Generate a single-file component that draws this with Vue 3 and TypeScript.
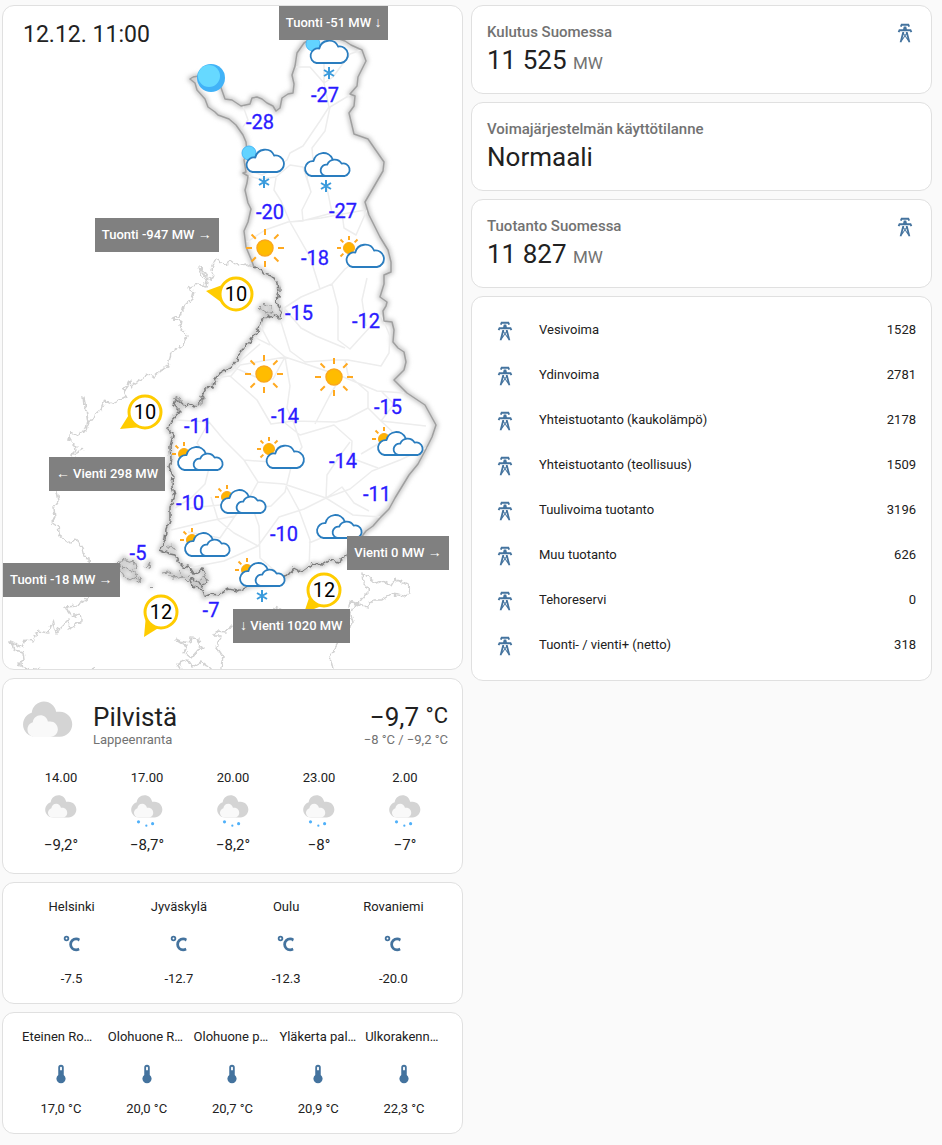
<script setup lang="ts">
interface Point { x: number; y: number }
interface Temp extends Point { text: string }
interface Wind extends Point { text: string; tail: string }
interface Flow { id: string; before?: string; text: string; after?: string }

const towerPath =
  'M8.28,5.45L6.5,4.55L7.76,2H16.23L17.5,4.55L15.72,5.44L15,4H9L8.28,5.45M18.62,8H14.09L13.3,5H10.7L9.91,8H5.38L4.1,10.55L5.89,11.44L6.62,10H17.38L18.1,11.45L19.89,10.56L18.62,8M17.77,22H15.7L15.46,21.1L12,15.9L8.53,21.1L8.3,22H6.23L9.12,11H11.19L10.83,12.35L12,14.1L13.16,12.35L12.81,11H14.88L17.77,22M11.4,15L10.5,13.65L9.32,18.13L11.4,15M14.68,18.12L13.5,13.64L12.6,15L14.68,18.12Z'
const celsiusPath =
  'M16.5,5C18.05,5 19.5,5.47 20.69,6.28L19.53,9.17C18.73,8.44 17.67,8 16.5,8C14,8 12,10 12,12.5C12,15 14,17 16.5,17C17.53,17 18.47,16.66 19.23,16.08L20.37,18.93C19.24,19.61 17.92,20 16.5,20A7.5,7.5 0 0,1 9,12.5A7.5,7.5 0 0,1 16.5,5M6,3A3,3 0 0,1 9,6A3,3 0 0,1 6,9A3,3 0 0,1 3,6A3,3 0 0,1 6,3M6,5A1,1 0 0,0 5,6A1,1 0 0,0 6,7A1,1 0 0,0 7,6A1,1 0 0,0 6,5Z'
const thermometerPath =
  'M15 13V5A3 3 0 0 0 9 5V13A5 5 0 1 0 15 13M12 4A1 1 0 0 1 13 5V8H11V5A1 1 0 0 1 12 4Z'
const cloudBack =
  'm3.8863 5.035c-0.54892 0.16898-1.04 0.46637-1.4372 0.8636-0.63077 0.63041-1.0206 1.4933-1.0206 2.455 0 1.9251 1.5589 3.4682 3.4837 3.4682h6.9688c1.9251 0 3.484-1.5981 3.484-3.5232 0-1.9251-1.5589-3.5232-3.484-3.5232h-1.0834c-0.25294-1.6916-1.6986-2.9083-3.4463-2.9083-1.7995 0-3.2805 1.4153-3.465 3.1679'
const cloudFront =
  'm4.1996 7.6995c-0.33902 0.10407-0.64276 0.28787-0.88794 0.5334-0.39017 0.38982-0.63147 0.92322-0.63147 1.5176 0 1.1896 0.96414 2.1431 2.1537 2.1431h4.3071c1.1896 0 2.153-0.98742 2.153-2.1777 0-1.1896-0.96344-2.1777-2.153-2.1777h-0.66992c-0.15593-1.0449-1.0499-1.7974-2.1297-1.7974-1.112 0-2.0274 0.87524-2.1417 1.9586'

const landBorder =
  'M193 77L199 76L208 78L219 82L225 99L232 100L241 106L250 104L252 98L257 97L262 99L267 103L273 106L276 111L280 108L282 98L288 94L293 93L294 84L292 75L295 66L297 53L304 43L312 38L330 36L345 41L351 45L362 50L366 61L358 77L357 86L350 94L355 96L354 106L349 113L354 134L368 139L384 162L383 171L365 202L369 215L380 237L388 250L391 262L391 272L384 275L384 284L380 297L387 302L386 306L383 311L384 321L392 322L394 330L393 342L398 348L404 352L406 362L404 370L394 380L407 393L425 405L436 425L432 437L426 449L418 464L409 475L395 498L389 509L380 518L373 526L366 531L357 543L346 556'
const westBorder =
  'M193 77L190 79L195 83L197 90L205 99L208 107L215 112L218 115L229 119L236 125L243 135L246 142L247 152L244 160L246 172L243 173L248 176L247 183L245 190L248 203L251 209L248 222L244 231L246 247L251 259L254 267'
const coast =
  'M254 267L260 269L265 274L273 277L278 283L279 291L277 300L279 308L282 311L280 319L275 315L263 318L260 326L255 334L248 343L242 349L237 360L231 367L221 372L215 379L213 387L207 386L203 393L202 400L194 407L188 403L184 406L176 399L174 405L180 411L171 421L168 430L173 435L170 447L171 459L169 467L173 475L172 487L175 496L170 508L170 520L166 530L165 540L160 550L170 554L175 555L179 562L185 568L189 566L194 574L203 569L207 579L203 586L196 581L190 579L193 586L202 589L204 597L211 594L218 595L228 589L238 591L251 585L267 583L281 579L288 575L294 568L302 572L313 564L322 565L331 559L337 563L346 556'
const sweden =
  'M254 267L246 264L238 266L231 261L225 265L216 259L211 270L214 276L207 280L202 276L199 267L208 278L206 286L198 284L188 288L194 292L192 299L184 306L182 314L172 319L181 320L180 326L187 336L183 344L171 353L168 366L160 371L153 377L149 374L134 384L131 388L130 381L124 389L126 396L112 403L105 400L100 411L94 416L88 424L84 397L85 407L88 420L86 430L76 436L71 431L69 440L76 447L72 455L83 449M72 455L74 463L61 479L57 491L59 501L54 508L55 518L51 522L58 527L60 536L70 543L75 538L82 548L84 557L89 558L90 575M88 598L77 606L66 607L72 616L80 613L81 621L68 629L69 619L61 627L56 634L53 620L48 633L38 631L33 641L25 640L22 647L10 642L15 650L23 652L24 660L19 665L28 668M34 670L40 667M91 669L94 668'
const estonia =
  'M176 639L187 646L184 652L191 658L198 650L203 648L198 645L199 638L191 637L190 643L180 641ZM182 669L178 663L188 660L193 667L201 662L212 670M221 668L223 657L217 648L221 636L213 636L217 631L226 632L232 625L240 628M349 607L350 601L358 604L365 595L370 590L363 583L362 573L377 583L382 581L391 586L395 579L408 585L410 592L404 596L391 594L382 600L373 600L367 607L355 604L351 613L353 622L349 629L342 636L330 657L333 669M284 611L278 608L270 613'
const islands =
  'M119 564L124 558L128 563L134 561L136 567L131 571L138 575L130 580L124 576L121 570ZM122 566L130 571M133 578L142 580L136 582M161 573L170 572L176 577L169 576M178 570L183 576L174 578M146 568L150 562L149 569M150 585L152 587M259 309L264 304L270 306L272 311L266 313ZM172 399L178 397L182 403M198 404L203 404L204 398L200 396M188 581L184 577L190 576M166 548L172 545L176 551M197 583L202 580L205 573L207 583'
const roads =
  'M296 67L310 67L324 83L333 77L350 54L361 50M324 64V83L329 107L320 121L303 146L290 153L287 160L275 168L262 175L250 171M350 95L330 107L325 131L312 148L313 160L307 178L311 192L302 210L303 221L288 222L265 230L247 242M243 106L248 120L242 128M276 178L274 190L281 201L290 222L310 257L320 289L301 297L284 308M311 192L303 167L290 165L276 177L260 179L248 176M326 183L332 213L302 221M332 213L342 213L344 228L356 235L367 210M290 222L321 218L365 210M320 289L332 284L345 269L360 258L385 263M332 284L338 307L338 340L350 349L381 315L390 336L389 353L381 366L348 360L333 360L305 362L290 351L281 322L284 308M284 308L301 328L316 336L345 348M367 278L362 300L366 326M260 325L270 344L285 357L273 379L258 378L231 366M285 357L303 363L341 376L377 391L404 393M345 360L348 375L368 392L368 408L381 421L426 426M285 357L290 386L287 408L293 421L336 422L347 419L368 408M213 378L230 376L257 400L271 424L293 421L302 447L292 463L285 492L271 506L250 509L230 504L190 508M176 420L209 422L224 440L244 460L285 463M209 422L197 443L210 464L205 484L191 498L175 508M244 460L258 482L284 484L326 498L350 489L372 471L400 460L428 447M258 482L249 498L259 526L260 558L282 577M285 484L299 510L310 540L309 571M285 423L300 435L334 425L352 441L351 458L378 468M326 498L327 475L341 454L350 442M326 498L304 509L279 517L258 546L224 561L188 568M326 498L353 515L380 517M309 543L326 536L354 529M249 500L235 516L209 521L171 530M235 516L220 538L188 532M258 546L234 533L218 520L211 497M369 511L354 503L342 487L326 498M260 344L245 357L230 370M231 376L240 365L285 357M250 335L270 345M381 421L394 404L381 391M361 454L395 434L381 421M315 424L329 397L340 378'

const snow: Point[] = [{ x: 329, y: 73 }, { x: 264, y: 182 }, { x: 326, y: 186 }, { x: 262, y: 596 }]
const suns: Point[] = [{ x: 265, y: 248 }, { x: 264, y: 374 }, { x: 334, y: 377 }]
const coldBalls: Point[] = [{ x: 313, y: 44 }, { x: 249, y: 153 }]
const allRays = [0, 45, 90, 135, 180, 225, 270, 315]
const upperRays = [0, 270, 315]
const smallSuns = [
  { x: 349, y: 248, rays: allRays }, { x: 269, y: 449, rays: allRays },
  { x: 184, y: 454, rays: upperRays }, { x: 227, y: 497, rays: upperRays },
  { x: 192, y: 540, rays: upperRays }, { x: 384, y: 439, rays: upperRays },
  { x: 247, y: 570, rays: upperRays },
]
const clouds: Point[] = [{ x: 309, y: 38 }, { x: 245, y: 147 }, { x: 345, y: 242 }, { x: 265, y: 443 }]
const doubleClouds: Point[] = [
  { x: 304, y: 151 }, { x: 177, y: 445 }, { x: 220, y: 488 }, { x: 184, y: 531 },
  { x: 316, y: 513 }, { x: 377, y: 430 }, { x: 239, y: 561 },
]
const temps: Temp[] = [
  { x: 325, y: 102, text: '-27' }, { x: 260, y: 129, text: '-28' }, { x: 270, y: 219, text: '-20' },
  { x: 343, y: 218, text: '-27' }, { x: 315, y: 265, text: '-18' }, { x: 299, y: 320, text: '-15' },
  { x: 366, y: 328, text: '-12' }, { x: 198, y: 433, text: '-11' }, { x: 285, y: 423, text: '-14' },
  { x: 388, y: 414, text: '-15' }, { x: 343, y: 468, text: '-14' }, { x: 190, y: 510, text: '-10' },
  { x: 377, y: 501, text: '-11' }, { x: 284, y: 541, text: '-10' }, { x: 138, y: 560, text: '-5' },
  { x: 211, y: 617, text: '-7' },
]
const winds: Wind[] = [
  { x: 236, y: 294, text: '10', tail: 'M206 291L225 284V305Z' },
  { x: 145, y: 412, text: '10', tail: 'M120 429L130 413L142 427Z' },
  { x: 161, y: 612, text: '12', tail: 'M144 637L146 615L160 627Z' },
  { x: 324, y: 590, text: '12', tail: 'M304 613L310 595L324 605Z' },
]
const flows: Flow[] = [
  { id: 'north', text: 'Tuonti -51 MW', after: '↓' },
  { id: 'sweden-north', text: 'Tuonti -947 MW', after: '→' },
  { id: 'sweden-south', before: '←', text: 'Vienti 298 MW' },
  { id: 'aland', text: 'Tuonti -18 MW', after: '→' },
  { id: 'russia', text: 'Vienti 0 MW', after: '→' },
  { id: 'estonia', before: '↓', text: 'Vienti 1020 MW' },
]

const forecast = [
  { time: '14.00', temp: '−9,2°', snowy: false },
  { time: '17.00', temp: '−8,7°', snowy: true },
  { time: '20.00', temp: '−8,2°', snowy: true },
  { time: '23.00', temp: '−8°', snowy: true },
  { time: '2.00', temp: '−7°', snowy: true },
]
const glances = [
  {
    id: 'cities', icon: celsiusPath,
    items: [
      { name: 'Helsinki', value: '-7.5' }, { name: 'Jyväskylä', value: '-12.7' },
      { name: 'Oulu', value: '-12.3' }, { name: 'Rovaniemi', value: '-20.0' },
    ],
  },
  {
    id: 'rooms', icon: thermometerPath,
    items: [
      { name: 'Eteinen Ro…', value: '17,0 °C' }, { name: 'Olohuone R…', value: '20,0 °C' },
      { name: 'Olohuone p…', value: '20,7 °C' }, { name: 'Yläkerta pal…', value: '20,9 °C' },
      { name: 'Ulkorakenn…', value: '22,3 °C' },
    ],
  },
]
const states = [
  { name: 'Kulutus Suomessa', value: '11 525', unit: 'MW', icon: true },
  { name: 'Voimajärjestelmän käyttötilanne', value: 'Normaali', unit: '', icon: false },
  { name: 'Tuotanto Suomessa', value: '11 827', unit: 'MW', icon: true },
]
const production = [
  { name: 'Vesivoima', value: '1528' },
  { name: 'Ydinvoima', value: '2781' },
  { name: 'Yhteistuotanto (kaukolämpö)', value: '2178' },
  { name: 'Yhteistuotanto (teollisuus)', value: '1509' },
  { name: 'Tuulivoima tuotanto', value: '3196' },
  { name: 'Muu tuotanto', value: '626' },
  { name: 'Tehoreservi', value: '0' },
  { name: 'Tuonti- / vienti+ (netto)', value: '318' },
]
const at = (p: Point): string => `translate(${p.x} ${p.y})`
</script>

<template>
  <main class="board">
    <div class="column">
      <section class="card map">
        <svg class="map-art" viewBox="3 6 459 663">
          <defs>
            <filter id="soft" x="-10%" y="-10%" width="120%" height="120%">
              <feGaussianBlur stdDeviation="2" />
            </filter>
            <filter id="rough" x="-5%" y="-5%" width="110%" height="110%">
              <feTurbulence type="fractalNoise" baseFrequency="0.2" numOctaves="2" seed="4" />
              <feDisplacementMap in="SourceGraphic" scale="6" xChannelSelector="R" yChannelSelector="G" />
            </filter>
          </defs>
          <g class="line">
            <path class="faint" :d="sweden" filter="url(#rough)" />
            <path class="faint" :d="estonia" filter="url(#rough)" />
            <g class="shade" filter="url(#soft)">
              <path :d="landBorder" />
              <path :d="westBorder" />
              <path :d="coast" />
              <path :d="islands" />
            </g>
            <path class="road" :d="roads" />
            <path class="border" :d="landBorder" />
            <path class="border" :d="westBorder" />
            <path class="coast" :d="coast" filter="url(#rough)" />
            <path class="isle" :d="islands" filter="url(#rough)" />
          </g>

          <g>
            <circle cx="211" cy="78" r="14" fill="#41b2f7" />
            <circle cx="209" cy="76" r="11" fill="#66d9ff" />
            <circle v-for="(p, i) in coldBalls" :key="i" :cx="p.x" :cy="p.y" r="7" fill="#62d3ff" stroke="#45b7f8" />
          </g>
          <g v-for="(p, i) in suns" :key="'s' + i" :transform="at(p)">
            <circle r="8" fill="#ffbc00" stroke="#faa81c" stroke-width="1.5" />
            <path v-for="r in allRays" :key="r" d="M0 -13V-19" :transform="`rotate(${r})`" class="ray" />
          </g>
          <g v-for="(p, i) in smallSuns" :key="'m' + i" :transform="at(p)">
            <circle r="5.5" fill="#ffb400" stroke="#faa81c" />
            <path v-for="r in p.rays" :key="r" d="M0 -8V-12" :transform="`rotate(${r})`" class="ray" />
          </g>
          <g class="cloud">
            <path v-for="(p, i) in clouds" :key="'c' + i" :transform="at(p)"
              d="M7.5 25A7.2 7.2 0 0 1 10.3 10.6A10 10 0 0 1 29.2 8.6A8.3 8.3 0 1 1 32 25Z" />
            <g v-for="(p, i) in doubleClouds" :key="'d' + i" :transform="at(p)">
              <path d="M7.5 25A7.4 7.4 0 0 1 9.5 10.2A10 10 0 0 1 28.5 8L36 16V25Z" />
              <path d="M21.5 25A5.7 5.7 0 0 1 23.2 13.7A8 8 0 0 1 37.6 12.6A6.3 6.3 0 1 1 40.8 25Z" />
            </g>
          </g>
          <g class="flake">
            <path v-for="(p, i) in snow" :key="i" :transform="at(p)" d="M0 -6V6M-5 -3L5 3M-5 3L5 -3" />
          </g>
          <g class="wind">
            <g v-for="(w, i) in winds" :key="i">
              <path :d="w.tail" />
              <circle :cx="w.x" :cy="w.y" r="16" />
              <text :x="w.x" :y="w.y + 7">{{ w.text }}</text>
            </g>
          </g>
          <g class="temp">
            <text v-for="(t, i) in temps" :key="i" :x="t.x" :y="t.y">{{ t.text }}</text>
          </g>
          <text class="stamp" x="23" y="42">12.12. 11:00</text>
        </svg>
        <span v-for="f in flows" :key="f.id" class="flow" :class="f.id">
          <span v-if="f.before" class="arrow">{{ f.before }}</span>
          {{ f.text }}
          <span v-if="f.after" class="arrow">{{ f.after }}</span>
        </span>
      </section>

      <section class="card weather">
        <header class="now">
          <svg class="now-icon" viewBox="0 0 17 17">
            <path :d="cloudBack" fill="#d4d4d4" />
            <path :d="cloudFront" fill="#f9f9f9" />
          </svg>
          <div class="now-name">
            <h2 class="now-big">Pilvistä</h2>
            <p class="now-small">Lappeenranta</p>
          </div>
          <div class="now-temp">
            <p class="now-big">−9,7 <span class="degree">°C</span></p>
            <p class="now-small">−8 °C / −9,2 °C</p>
          </div>
        </header>
        <ul class="forecast">
          <li v-for="h in forecast" :key="h.time">
            <span>{{ h.time }}</span>
            <svg class="hour-icon" viewBox="0 0 17 17">
              <path :d="cloudBack" fill="#d4d4d4" />
              <path :d="cloudFront" fill="#f9f9f9" />
              <g v-if="h.snowy" fill="#4fb0f9">
                <circle cx="4.7" cy="13.8" r="0.7" />
                <circle cx="8.2" cy="15.5" r="0.5" />
                <circle cx="11" cy="14.6" r="0.7" />
              </g>
            </svg>
            <span class="hour-temp">{{ h.temp }}</span>
          </li>
        </ul>
      </section>

      <section v-for="g in glances" :key="g.id" class="card">
        <ul class="glance">
          <li v-for="item in g.items" :key="item.name">
            <span :class="{ clipped: item.name.endsWith('…') }">{{ item.name }}</span>
            <svg class="icon" viewBox="0 0 24 24"><path :d="g.icon" /></svg>
            <span>{{ item.value }}</span>
          </li>
        </ul>
      </section>
    </div>

    <div class="column">
      <section v-for="s in states" :key="s.name" class="card state">
        <div>
          <h2 class="state-name">{{ s.name }}</h2>
          <p class="state-value">{{ s.value }} <span v-if="s.unit" class="unit">{{ s.unit }}</span></p>
        </div>
        <svg v-if="s.icon" class="icon" viewBox="0 0 24 24"><path :d="towerPath" /></svg>
      </section>

      <section class="card">
        <ul class="entities">
          <li v-for="p in production" :key="p.name">
            <svg class="icon" viewBox="0 0 24 24"><path :d="towerPath" /></svg>
            <span class="entity-name">{{ p.name }}</span>
            <span>{{ p.value }}</span>
          </li>
        </ul>
      </section>
    </div>
  </main>
</template>

<style>
body {
  margin: 0;
  background: #fafafa;
}
</style>

<style scoped>
.board {
  display: grid;
  grid-template-columns: minmax(0, 1fr) minmax(0, 1fr);
  gap: 8px;
  align-items: start;
  padding: 5px 10px 8px 2px;
  color: #212121;
  font: 13px/20px Roboto, "Liberation Sans", sans-serif;
}
h2, p, ul {
  margin: 0;
  padding: 0;
  font-weight: 400;
  list-style: none;
}
svg {
  display: block;
  flex: none;
}
.column {
  display: flex;
  flex-direction: column;
  gap: 8px;
}
.card {
  background: #fff;
  border: 1px solid #e0e0e0;
  border-radius: 12px;
}
.icon {
  width: 22px;
  height: 22px;
  fill: #44739e;
}

.map {
  position: relative;
  overflow: hidden;
}
.map-art {
  width: 100%;
  height: auto;
}
.line path {
  fill: none;
  stroke-linejoin: round;
}
.line .faint {
  stroke: #d2d2d2;
  stroke-width: 1.5;
}
.line .road {
  stroke: #ededed;
  stroke-width: 1.5;
}
.line .shade path {
  stroke: #c8c8c8;
  stroke-width: 5;
}
.line .border {
  stroke: #a0a0a0;
  stroke-width: 1.5;
}
.line .coast {
  stroke: #7c7c7c;
  stroke-width: 1.5;
}
.line .isle {
  stroke: #9a9a9a;
}
.ray {
  fill: none;
  stroke: #ffa91f;
  stroke-width: 2;
}
.cloud path {
  fill: #fff;
  stroke: #2a7dbf;
  stroke-width: 1.8;
  stroke-linejoin: round;
}
.flake {
  fill: none;
  stroke: #3b9bdc;
  stroke-width: 2;
}
.wind path {
  fill: #fc0;
}
.wind circle {
  fill: #fff;
  stroke: #fc0;
  stroke-width: 3;
}
.wind text,
.temp text {
  font-size: 20px;
  text-anchor: middle;
}
.temp text {
  fill: #2a1bff;
  stroke: #2a1bff;
  stroke-width: 0.3;
}
.stamp {
  font-size: 23px;
  fill: #222;
}
.flow {
  position: absolute;
  padding: 7px;
  background: #808080;
  color: #fff;
  font-weight: 500;
  white-space: nowrap;
}
.arrow {
  font-family: "Liberation Sans", sans-serif;
  font-size: 14px;
  line-height: 16px;
}
.north { left: 60.1%; top: 0; }
.sweden-north { left: 20%; top: 32%; }
.sweden-south { left: 10%; top: 68%; }
.aland { left: 0; top: 84%; }
.russia { left: 75%; top: 80%; }
.estonia { left: 50.1%; top: 91%; }

.weather {
  padding: 16px 14px 18px 15px;
}
.now {
  display: flex;
}
.now-icon {
  width: 60px;
  height: 60px;
}
.now-name {
  flex: 1;
  padding: 8px 0 0 15px;
}
.now-temp {
  padding-top: 8px;
  text-align: right;
}
.now-big {
  font-size: 26px;
  line-height: 28px;
}
.degree {
  font-size: 22px;
  line-height: 20px;
  vertical-align: 3px;
}
.now-small {
  color: #727272;
  line-height: 18px;
}
.forecast,
.glance {
  display: flex;
}
.forecast {
  padding-top: 13px;
}
.forecast li,
.glance li {
  flex: 1 1 0;
  min-width: 0;
  display: flex;
  flex-direction: column;
  align-items: center;
  white-space: nowrap;
}
.hour-icon {
  width: 38px;
  height: 38px;
  margin: 3px 0 6px;
}
.hour-temp {
  font-size: 15px;
}
.glance {
  padding: 14px 15px;
}
.glance .icon {
  margin: 16px 0 14px;
}
.clipped {
  width: calc(100% - 8px);
}

.state {
  display: flex;
  justify-content: space-between;
  padding: 16px 15px 15px;
}
.state-name {
  color: #727272;
  font-size: 15px;
  font-weight: 500;
  line-height: 20px;
}
.state-value {
  font-size: 26px;
  line-height: 36px;
}
.unit {
  color: #727272;
  font-size: 17px;
  line-height: 20px;
}
.entities {
  padding: 10px 15px 13px;
}
.entities li {
  display: flex;
  align-items: center;
  height: 45px;
}
.entities .icon {
  margin: 3px 23px 0 7px;
}
.entity-name {
  flex: 1;
}
</style>
